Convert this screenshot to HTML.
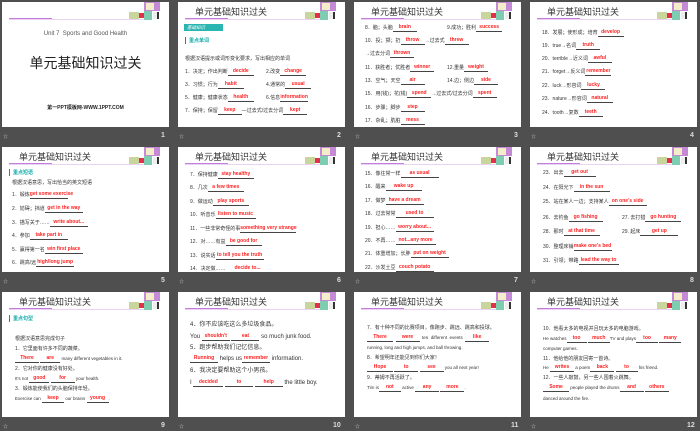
<!DOCTYPE html>
<html><head><meta charset="utf-8"><style>
body{margin:0;width:700px;height:431px;background:#4f4f4f;position:relative;overflow:hidden;font-family:"Liberation Sans","Noto Sans CJK SC",sans-serif}
.s{position:absolute;width:167px;height:125px;background:#fff;overflow:hidden}
.t{position:absolute;left:17px;top:3px;font-size:9px;color:#333;white-space:nowrap}
.b1{position:absolute;left:7px;top:16px;width:43px;height:2px;background:#c37fd8}
.b2{position:absolute;left:7px;top:17px;width:135px;height:1px;background:#ecd2f2}
.d1{position:absolute;left:142px;top:0;width:16px;height:9px;background:#c48ad6}
.d2{position:absolute;left:144px;top:1px;width:8px;height:7px;background:#f4eec8}
.d3{position:absolute;left:127px;top:10px;width:10px;height:7px;background:#c9d59a}
.d4{position:absolute;left:137px;top:11px;width:5px;height:5px;background:#e0304a}
.d5{position:absolute;left:142px;top:9px;width:8px;height:9px;background:#7dceb0}
.d6{position:absolute;left:151px;top:10px;width:6px;height:7px;background:#eee;border-right:2px solid #333;box-sizing:border-box}
.l{position:absolute;left:11px;white-space:nowrap;font-size:5px;color:#333;line-height:6px}
.a{display:inline-block;border-bottom:.7px solid #444;color:#f22;font-weight:bold;text-align:center;line-height:5px;font-size:5px}
.a i{font-style:normal;position:relative;top:-1px}
.f{position:absolute;font-size:5px;color:#bbb}
.n{position:absolute;font-size:7px;color:#ddd;font-weight:bold}
.h{position:absolute;left:7px;font-size:5px;color:#1aa;font-weight:bold;border-left:1.5px solid #e33;padding-left:3px}
</style></head><body>

<div class="s" style="left:2px;top:2px">
<div class="b1"></div><div class="b2"></div><div class="d1"></div><div class="d2"></div><div class="d3"></div><div class="d4"></div><div class="d5"></div><div class="d6"></div>
<div style="position:absolute;left:0;width:167px;top:29px;text-align:center;font-size:6px;color:#555">Unit 7 &nbsp;Sports and Good Health</div>
<div style="position:absolute;left:0;width:167px;top:51px;text-align:center;font-size:14px;color:#222">单元基础知识过关</div>
<div style="position:absolute;left:0;width:167px;top:102px;text-align:center;font-size:5px;color:#222;font-weight:bold">第一PPT模板网-WWW.1PPT.COM</div>
</div>

<div class="s" style="left:178px;top:2px">
<div class="t">单元基础知识过关</div><div class="b1"></div><div class="b2"></div><div class="d1"></div><div class="d2"></div><div class="d3"></div><div class="d4"></div><div class="d5"></div><div class="d6"></div>
<div style="position:absolute;left:6px;top:22px;width:36px;height:7px;background:#2bb5b0;font-size:4.5px;color:#fff;line-height:7px;padding-left:3px;font-style:italic">基础知识</div>
<div class="h" style="top:35px">重点单词</div>
<div class="l" style="top:54px;left:7px">根据汉语提示或词形变化要求，写出相应的单词</div>
<div class="l" style="top:67px;left:7px">1．决定；作出判断<span class="a" style="width:26px"><i>decide</i></span></div>
<div class="l" style="top:67px;left:88px">2.改变<span class="a" style="width:26px"><i>change</i></span></div>
<div class="l" style="top:80px;left:7px">3．习惯；行为<span class="a" style="width:26px"><i>habit</i></span></div>
<div class="l" style="top:80px;left:88px">4.通常的<span class="a" style="width:26px"><i>usual</i></span></div>
<div class="l" style="top:93px;left:7px">5．健康；健康状态<span class="a" style="width:26px"><i>health</i></span></div>
<div class="l" style="top:93px;left:88px">6.信息<span class="a" style="width:28px"><i>information</i></span></div>
<div class="l" style="top:106px;left:7px">7．保持；保留<span class="a" style="width:24px"><i>keep</i></span>—过去式/过去分词<span class="a" style="width:24px"><i>kept</i></span></div>
</div>

<div class="s" style="left:354px;top:2px">
<div class="t">单元基础知识过关</div><div class="b1"></div><div class="b2"></div><div class="d1"></div><div class="d2"></div><div class="d3"></div><div class="d4"></div><div class="d5"></div><div class="d6"></div>
<div class="l" style="top:23px">8．脑；头脑<span class="a" style="width:24px"><i>brain</i></span></div>
<div class="l" style="top:23px;left:93px">9.成功；胜利<span class="a" style="width:26px"><i>success</i></span></div>
<div class="l" style="top:36px">10．投；掷；扔<span class="a" style="width:24px"><i>throw</i></span>→过去式<span class="a" style="width:24px"><i>threw</i></span></div>
<div class="l" style="top:49px">→过去分词<span class="a" style="width:24px"><i>thrown</i></span></div>
<div class="l" style="top:63px">11．获胜者；优胜者<span class="a" style="width:24px"><i>winner</i></span></div>
<div class="l" style="top:63px;left:93px">12.重量<span class="a" style="width:24px"><i>weight</i></span></div>
<div class="l" style="top:76px">13．空气；天空<span class="a" style="width:24px"><i>air</i></span></div>
<div class="l" style="top:76px;left:93px">14.边；侧边<span class="a" style="width:24px"><i>side</i></span></div>
<div class="l" style="top:89px">15．用(钱)；花(钱)<span class="a" style="width:24px"><i>spend</i></span>→过去式/过去分词<span class="a" style="width:24px"><i>spent</i></span></div>
<div class="l" style="top:103px">16．步骤；脚步<span class="a" style="width:24px"><i>step</i></span></div>
<div class="l" style="top:116px">17．杂乱；肮脏<span class="a" style="width:24px"><i>mess</i></span></div>
</div>

<div class="s" style="left:530px;top:2px">
<div class="t">单元基础知识过关</div><div class="b1"></div><div class="b2"></div><div class="d1"></div><div class="d2"></div><div class="d3"></div><div class="d4"></div><div class="d5"></div><div class="d6"></div>
<div class="l" style="top:28px;left:12px">18．发展；使形成；培育<span class="a" style="width:26px"><i>develop</i></span></div>
<div class="l" style="top:41px;left:12px">19．true→名词<span class="a" style="width:24px"><i>truth</i></span></div>
<div class="l" style="top:54px;left:12px">20．terrible→近义词<span class="a" style="width:24px"><i>awful</i></span></div>
<div class="l" style="top:67px;left:12px">21．forget→反义词<span class="a" style="width:26px"><i>remember</i></span></div>
<div class="l" style="top:81px;left:12px">22．luck→形容词<span class="a" style="width:24px"><i>lucky</i></span></div>
<div class="l" style="top:94px;left:12px">23．nature→形容词<span class="a" style="width:26px"><i>natural</i></span></div>
<div class="l" style="top:108px;left:12px">24．tooth→复数<span class="a" style="width:24px"><i>teeth</i></span></div>
</div>

<div class="s" style="left:2px;top:147px">
<div class="t">单元基础知识过关</div><div class="b1"></div><div class="b2"></div><div class="d1"></div><div class="d2"></div><div class="d3"></div><div class="d4"></div><div class="d5"></div><div class="d6"></div>
<div class="h" style="top:22px">重点短语</div>
<div class="l" style="top:33px;left:10px">根据汉语意思，写出恰当的英文短语</div>
<div class="l" style="top:45px;left:10px">1．锻炼<span class="a" style="width:38px"><i>get some exercise</i></span></div>
<div class="l" style="top:59px;left:10px">2．妨碍；挡道<span class="a" style="width:38px"><i>get in the way</i></span></div>
<div class="l" style="top:73px;left:10px">3．描写关于……<span class="a" style="width:38px"><i>write about...</i></span></div>
<div class="l" style="top:86px;left:10px">4．参加<span class="a" style="width:38px"><i>take part in</i></span></div>
<div class="l" style="top:100px;left:10px">5．赢得第一名<span class="a" style="width:38px"><i>win first place</i></span></div>
<div class="l" style="top:113px;left:10px">6．跳高/远<span class="a" style="width:38px"><i>high/long jump</i></span></div>
</div>

<div class="s" style="left:178px;top:147px">
<div class="t">单元基础知识过关</div><div class="b1"></div><div class="b2"></div><div class="d1"></div><div class="d2"></div><div class="d3"></div><div class="d4"></div><div class="d5"></div><div class="d6"></div>
<div class="l" style="top:25px;left:12px">7．保持健康<span class="a" style="width:36px"><i>stay healthy</i></span></div>
<div class="l" style="top:38px;left:12px">8．几次<span class="a" style="width:36px"><i>a few times</i></span></div>
<div class="l" style="top:52px;left:12px">9．做运动<span class="a" style="width:36px"><i>play sports</i></span></div>
<div class="l" style="top:65px;left:12px">10．听音乐<span class="a" style="width:40px"><i>listen to music</i></span></div>
<div class="l" style="top:79px;left:12px">11．一些非常奇怪的事<span class="a" style="width:56px"><i>something very strange</i></span></div>
<div class="l" style="top:92px;left:12px">12．对……有益<span class="a" style="width:36px"><i>be good for</i></span></div>
<div class="l" style="top:106px;left:12px">13．说实话<span class="a" style="width:48px"><i>to tell you the truth</i></span></div>
<div class="l" style="top:119px;left:12px">14．决定做……<span class="a" style="width:44px"><i>decide to...</i></span></div>
</div>

<div class="s" style="left:354px;top:147px">
<div class="t">单元基础知识过关</div><div class="b1"></div><div class="b2"></div><div class="d1"></div><div class="d2"></div><div class="d3"></div><div class="d4"></div><div class="d5"></div><div class="d6"></div>
<div class="l" style="top:24px">15．像往常一样<span class="a" style="width:38px"><i>as usual</i></span></div>
<div class="l" style="top:37px">16．醒来<span class="a" style="width:36px"><i>wake up</i></span></div>
<div class="l" style="top:51px">17．做梦<span class="a" style="width:38px"><i>have a dream</i></span></div>
<div class="l" style="top:64px">18．过去常常<span class="a" style="width:38px"><i>used to</i></span></div>
<div class="l" style="top:78px">19．担心……<span class="a" style="width:38px"><i>worry about...</i></span></div>
<div class="l" style="top:91px">20．不再……<span class="a" style="width:40px"><i>not...any more</i></span></div>
<div class="l" style="top:104px">21．体重增加；长胖<span class="a" style="width:38px"><i>put on weight</i></span></div>
<div class="l" style="top:118px">22．沙发土豆<span class="a" style="width:38px"><i>couch potato</i></span></div>
</div>

<div class="s" style="left:530px;top:147px">
<div class="t">单元基础知识过关</div><div class="b1"></div><div class="b2"></div><div class="d1"></div><div class="d2"></div><div class="d3"></div><div class="d4"></div><div class="d5"></div><div class="d6"></div>
<div class="l" style="top:23px;left:13px">23．出去<span class="a" style="width:32px"><i>get out</i></span></div>
<div class="l" style="top:38px;left:13px">24．在阳光下<span class="a" style="width:36px"><i>in the sun</i></span></div>
<div class="l" style="top:52px;left:13px">25．站在某人一边；支持某人<span class="a" style="width:38px"><i>on one's side</i></span></div>
<div class="l" style="top:68px;left:13px">26．去钓鱼<span class="a" style="width:34px"><i>go fishing</i></span></div>
<div class="l" style="top:68px;left:92px">27. 去打猎<span class="a" style="width:36px"><i>go hunting</i></span></div>
<div class="l" style="top:82px;left:13px">28．那时<span class="a" style="width:36px"><i>at that time</i></span></div>
<div class="l" style="top:82px;left:92px">29. 起床<span class="a" style="width:38px"><i>get up</i></span></div>
<div class="l" style="top:97px;left:13px">30．整理床铺<span class="a" style="width:38px"><i>make one's bed</i></span></div>
<div class="l" style="top:111px;left:13px">31．引领；带路<span class="a" style="width:40px"><i>lead the way to</i></span></div>
</div>

<div class="s" style="left:2px;top:292px">
<div class="t">单元基础知识过关</div><div class="b1"></div><div class="b2"></div><div class="d1"></div><div class="d2"></div><div class="d3"></div><div class="d4"></div><div class="d5"></div><div class="d6"></div>
<div class="h" style="top:23px">重点句型</div>
<div class="l" style="top:44px;left:13px">根据汉语意思完成句子</div>
<div class="l" style="top:54px;left:13px">1．它里面有许多不同的蔬菜。</div>
<div class="l" style="top:64px;left:13px;font-size:4.5px"><span class="a" style="width:24px"><i>There</i></span> <span class="a" style="width:20px"><i>are</i></span> many different vegetables in it.</div>
<div class="l" style="top:74px;left:13px">2．它对你的健康没有好处。</div>
<div class="l" style="top:84px;left:13px;font-size:4.5px">It's not <span class="a" style="width:20px"><i>good</i></span> <span class="a" style="width:24px"><i>for</i></span> your health.</div>
<div class="l" style="top:94px;left:13px">3．锻炼能使我们的头脑保持年轻。</div>
<div class="l" style="top:104px;left:13px;font-size:4.5px">Exercise can <span class="a" style="width:22px"><i>keep</i></span> our brains <span class="a" style="width:22px"><i>young</i></span>.</div>
</div>

<div class="s" style="left:178px;top:292px">
<div class="t">单元基础知识过关</div><div class="b1"></div><div class="b2"></div><div class="d1"></div><div class="d2"></div><div class="d3"></div><div class="d4"></div><div class="d5"></div><div class="d6"></div>
<div class="l" style="top:30px;left:12px;font-size:6px;line-height:7px">4．你不应该吃这么多垃圾食品。</div>
<div class="l" style="top:42px;left:12px;font-size:6px;line-height:7px">You <span class="a" style="width:28px"><i>shouldn't</i></span> <span class="a" style="width:28px"><i>eat</i></span> so much junk food.</div>
<div class="l" style="top:53px;left:12px;font-size:6px;line-height:7px">5．跑步帮助我们记忆信息。</div>
<div class="l" style="top:64px;left:12px;font-size:6px;line-height:7px"><span class="a" style="width:28px"><i>Running</i></span> helps us<span class="a" style="width:28px"><i>remember</i></span> information.</div>
<div class="l" style="top:76px;left:12px;font-size:6px;line-height:7px">6．我决定要帮助这个小男孩。</div>
<div class="l" style="top:88px;left:12px;font-size:6px;line-height:7px">I <span class="a" style="width:30px"><i>decided</i></span> <span class="a" style="width:28px"><i>to</i></span> <span class="a" style="width:28px"><i>help</i></span> the little boy.</div>
</div>

<div class="s" style="left:354px;top:292px">
<div class="t">单元基础知识过关</div><div class="b1"></div><div class="b2"></div><div class="d1"></div><div class="d2"></div><div class="d3"></div><div class="d4"></div><div class="d5"></div><div class="d6"></div>
<div class="l" style="top:33px;left:13px">7．有十种不同的比赛项目，像跑步、跳远、跳高和投球。</div>
<div class="l" style="top:43px;left:13px;font-size:4.5px"><span class="a" style="width:26px"><i>There</i></span> &nbsp;<span class="a" style="width:24px"><i>were</i></span> &nbsp;ten &nbsp;different &nbsp;events &nbsp;<span class="a" style="width:24px"><i>like</i></span></div>
<div class="l" style="top:53px;left:13px;font-size:4.5px">running, long and high jumps, and ball throwing.</div>
<div class="l" style="top:63px;left:13px">8．希望明年还能见到你们大家！</div>
<div class="l" style="top:73px;left:13px;font-size:4.5px"><span class="a" style="width:26px"><i>Hope</i></span> <span class="a" style="width:24px"><i>to</i></span> <span class="a" style="width:24px"><i>see</i></span> you all next year!</div>
<div class="l" style="top:83px;left:13px">9．蒂姆不再活跃了。</div>
<div class="l" style="top:93px;left:13px;font-size:4.5px">Tim is<span class="a" style="width:22px"><i>not</i></span> active <span class="a" style="width:24px"><i>any</i></span> <span class="a" style="width:24px"><i>more</i></span>.</div>
</div>

<div class="s" style="left:530px;top:292px">
<div class="t">单元基础知识过关</div><div class="b1"></div><div class="b2"></div><div class="d1"></div><div class="d2"></div><div class="d3"></div><div class="d4"></div><div class="d5"></div><div class="d6"></div>
<div class="l" style="top:34px;left:13px">10．他看太多的电视并且玩太多的电脑游戏。</div>
<div class="l" style="top:44px;left:13px;font-size:4.5px">He watches<span class="a" style="width:20px"><i>too</i></span> <span class="a" style="width:22px"><i>much</i></span>TV and plays<span class="a" style="width:22px"><i>too</i></span> <span class="a" style="width:22px"><i>many</i></span></div>
<div class="l" style="top:54px;left:13px;font-size:4.5px">computer games.</div>
<div class="l" style="top:64px;left:13px">11．他给他的朋友回寄一首诗。</div>
<div class="l" style="top:73px;left:13px;font-size:4.5px">He <span class="a" style="width:24px"><i>writes</i></span> a poem<span class="a" style="width:24px"><i>back</i></span> <span class="a" style="width:22px"><i>to</i></span> his friend.</div>
<div class="l" style="top:83px;left:13px">12．一些人敲鼓，另一些人围着火跳舞。</div>
<div class="l" style="top:93px;left:13px;font-size:4.5px"><span class="a" style="width:26px"><i>Some</i></span> people played the drums<span class="a" style="width:24px"><i>and</i></span> <span class="a" style="width:24px"><i>others</i></span></div>
<div class="l" style="top:104px;left:13px;font-size:4.5px">danced around the fire.</div>
</div>

<div class="f" style="left:3px;top:133px">☆</div><div class="n" style="left:161px;top:132px">1</div>
<div class="f" style="left:179px;top:133px">☆</div><div class="n" style="left:337px;top:132px">2</div>
<div class="f" style="left:355px;top:133px">☆</div><div class="n" style="left:514px;top:132px">3</div>
<div class="f" style="left:531px;top:133px">☆</div><div class="n" style="left:690px;top:132px">4</div>
<div class="f" style="left:3px;top:278px">☆</div><div class="n" style="left:161px;top:277px">5</div>
<div class="f" style="left:179px;top:278px">☆</div><div class="n" style="left:337px;top:277px">6</div>
<div class="f" style="left:355px;top:278px">☆</div><div class="n" style="left:514px;top:277px">7</div>
<div class="f" style="left:531px;top:278px">☆</div><div class="n" style="left:690px;top:277px">8</div>
<div class="f" style="left:3px;top:423px">☆</div><div class="n" style="left:161px;top:422px">9</div>
<div class="f" style="left:179px;top:423px">☆</div><div class="n" style="left:333px;top:422px">10</div>
<div class="f" style="left:355px;top:423px">☆</div><div class="n" style="left:511px;top:422px">11</div>
<div class="f" style="left:531px;top:423px">☆</div><div class="n" style="left:687px;top:422px">12</div>
</body></html>
